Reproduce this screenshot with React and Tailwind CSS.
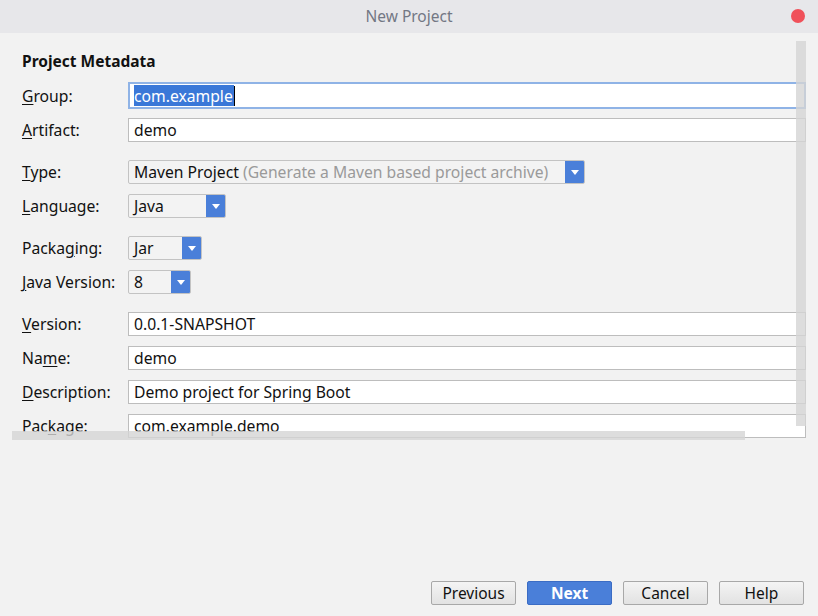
import React from 'react'

const font = { fontFamily: '"Noto Sans", "Open Sans", sans-serif' }

function Label({ pre, u, post }) {
  return (
    <div className="w-[106px] shrink-0 pt-[2px] text-[15.7px] text-[#111] leading-none whitespace-nowrap">
      {pre}
      <span className="underline underline-offset-2">{u}</span>
      {post}
    </div>
  )
}

function TextField({ value, focused }) {
  if (focused) {
    return (
      <div className="h-[27px] w-[700px] bg-white border-2 border-[#8fb3e6] flex items-center pl-[4px]">
        <span className="bg-[#3a78d8] text-white text-[15.7px] leading-[20px] pt-[1px] pr-[1px]">{value}</span>
        <span className="w-px h-[20px] bg-black" />
      </div>
    )
  }
  return (
    <div className="h-[24px] w-[700px] bg-white border border-[#bdbdbd] flex items-center pl-[5px] pt-[2px] text-[15.7px] text-[#111]">
      {value}
    </div>
  )
}

function Combo({ width, value, hint }) {
  return (
    <div className={`h-[24px] ${width} bg-[#f3f3f3] border border-[#c3c3c3] rounded-[2px] flex items-center overflow-hidden`}>
      <div className="flex-1 pl-[5px] pt-[2px] text-[15.7px] text-[#111] whitespace-nowrap overflow-hidden">
        {value}
        {hint && <span className="text-[#9a9a9a]"> {hint}</span>}
      </div>
      <div className="w-[19px] h-full shrink-0 bg-[#4a7fd9] flex items-center justify-center">
        <svg width="8" height="5" viewBox="0 0 8 5">
          <path d="M0 0 L8 0 L4 5 Z" fill="#fff" />
        </svg>
      </div>
    </div>
  )
}

function Row({ label, children, mt }) {
  return (
    <div className={`flex items-center pl-[22px] ${mt}`}>
      {label}
      {children}
    </div>
  )
}

function Button({ children, primary }) {
  return primary ? (
    <button className="w-[85px] h-[24px] pt-[2px] rounded-[2px] border border-[#3b6cc4] bg-[#4a7fd9] text-white font-bold text-[15.5px] leading-none">
      {children}
    </button>
  ) : (
    <button className="w-[85px] h-[24px] pt-[2px] rounded-[2px] border border-[#a8a8a8] bg-gradient-to-b from-[#f4f4f4] to-[#e2e2e2] text-[#111] text-[15.5px] leading-none">
      {children}
    </button>
  )
}

export default function App() {
  return (
    <div className="w-[818px] h-[616px] bg-[#f2f2f2] flex flex-col overflow-hidden" style={font}>
      {/* Title bar */}
      <div className="h-[33px] shrink-0 bg-[#e7e7ea] relative flex items-center justify-center">
        <span className="text-[15.5px] pt-[1px] text-[#737784]">New Project</span>
        <div className="absolute right-[13px] top-[9px] w-[14px] h-[14px] rounded-full bg-[#f0515a]" />
      </div>

      {/* Scroll viewport */}
      <div className="relative mt-[8px] h-[399px] w-[806px] shrink-0 overflow-hidden">
        <div className="pl-[22px] pt-[11px] h-[28px] text-[15.5px] font-bold text-[#111] leading-[18px]">
          Project Metadata
        </div>

        <Row mt="mt-[13px]" label={<Label u="G" post="roup:" />}>
          <TextField value="com.example" focused />
        </Row>
        <Row mt="mt-[9px]" label={<Label u="A" post="rtifact:" />}>
          <TextField value="demo" />
        </Row>

        <Row mt="mt-[18px]" label={<Label u="T" post="ype:" />}>
          <Combo width="w-[457px]" value="Maven Project" hint="(Generate a Maven based project archive)" />
        </Row>
        <Row mt="mt-[10px]" label={<Label u="L" post="anguage:" />}>
          <Combo width="w-[98px]" value="Java" />
        </Row>

        <Row mt="mt-[18px]" label={<Label pre="Packa" u="g" post="ing:" />}>
          <Combo width="w-[74px]" value="Jar" />
        </Row>
        <Row mt="mt-[10px]" label={<Label u="J" post="ava Version:" />}>
          <Combo width="w-[63px]" value="8" />
        </Row>

        <Row mt="mt-[18px]" label={<Label u="V" post="ersion:" />}>
          <TextField value="0.0.1-SNAPSHOT" />
        </Row>
        <Row mt="mt-[10px]" label={<Label pre="Na" u="m" post="e:" />}>
          <TextField value="demo" />
        </Row>
        <Row mt="mt-[10px]" label={<Label u="D" post="escription:" />}>
          <TextField value="Demo project for Spring Boot" />
        </Row>
        <Row mt="mt-[10px]" label={<Label pre="Pac" u="k" post="age:" />}>
          <TextField value="com.example.demo" />
        </Row>

        {/* scrollbars */}
        <div className="absolute right-0 top-0 w-[10px] h-[385px] bg-[#d4d4d4]/80" />
        <div className="absolute left-[12px] top-[390px] w-[733px] h-[9px] bg-[#d4d4d4]/80" />
      </div>

      {/* Buttons */}
      <div className="mt-auto flex justify-end gap-[11px] pr-[14px] pb-[11px]">
        <Button>Previous</Button>
        <Button primary>Next</Button>
        <Button>Cancel</Button>
        <Button>Help</Button>
      </div>
    </div>
  )
}
